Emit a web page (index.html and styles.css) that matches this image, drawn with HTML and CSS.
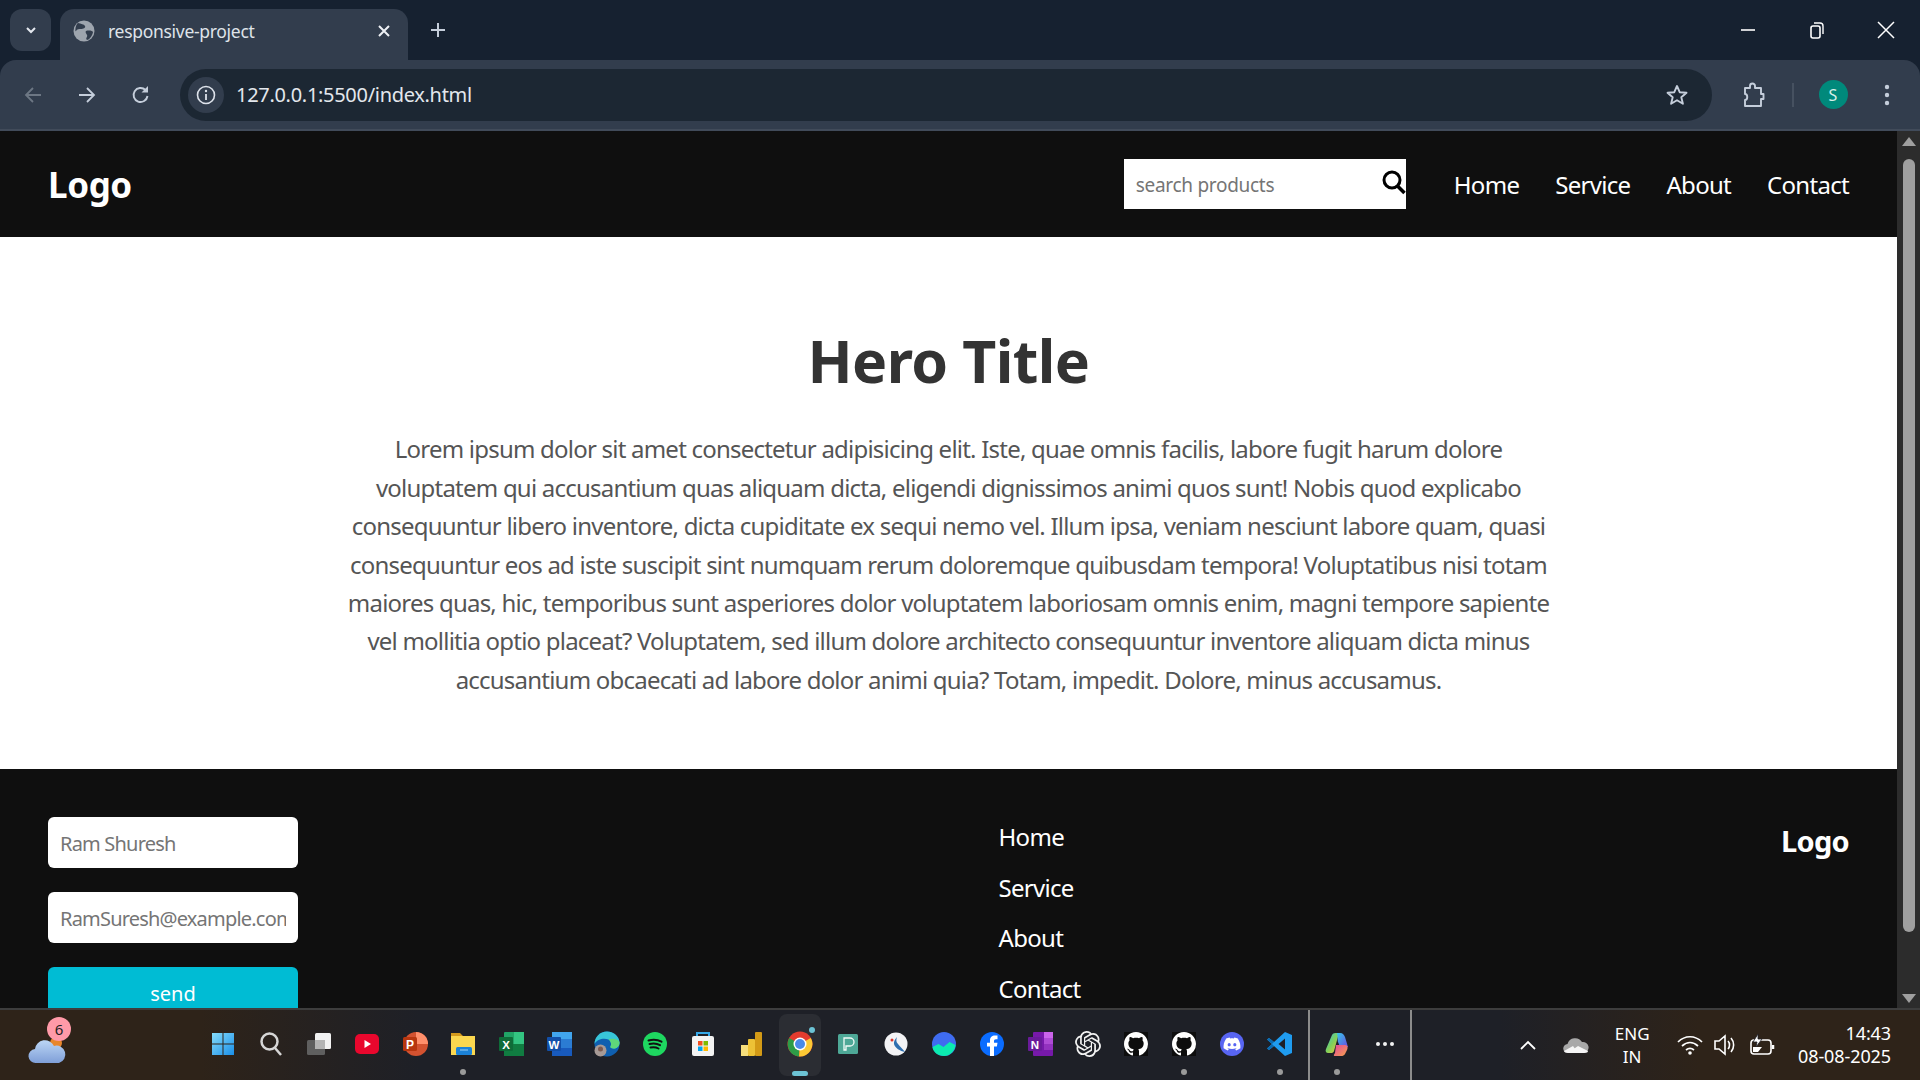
FILE: index.html
```html
<!DOCTYPE html>
<html>
<head>
  <meta charset="UTF-8">
  <meta name="viewport" content="width=device-width, initial-scale=1.0">
  <title>responsive-project</title>
  <link rel="stylesheet" href="styles.css">
</head>
<body>
  <div class="tabstrip">
    <div class="tab-menu">
      <svg width="14" height="14" viewBox="0 0 14 14"><path d="M3 5l4 4 4-4" fill="none" stroke="#e4e8ef" stroke-width="2"/></svg>
    </div>
    <div class="tab">
      <svg width="22" height="22" viewBox="0 0 22 22"><circle cx="11" cy="11" r="10.5" fill="#9ea5ae"/><path d="M5 3c3 1 6 1 7 3s-2 3-4 3-4 0-5 2-1-6 2-8zM13 11c3-1 7 0 7 1s-2 7-6 8c-2-2 1-3 0-5s-2-3-1-4z" fill="#323d4d"/></svg>
      <span class="tab-title">responsive-project</span>
      <svg class="tab-close" width="14" height="14" viewBox="0 0 14 14"><path d="M2 2l10 10M12 2L2 12" stroke="#eef1f5" stroke-width="2"/></svg>
    </div>
    <div class="new-tab">
      <svg width="18" height="18" viewBox="0 0 18 18"><path d="M9 2v14M2 9h14" stroke="#c5cedb" stroke-width="2"/></svg>
    </div>
    <div class="win-controls">
      <div class="win-btn"><svg width="16" height="16" viewBox="0 0 16 16"><path d="M1 8h14" stroke="#fff" stroke-width="1.6"/></svg></div>
      <div class="win-btn"><svg width="16" height="18" viewBox="0 0 16 18"><rect x="2" y="5" width="9" height="12" rx="2" fill="none" stroke="#fff" stroke-width="1.6"/><path d="M5 2h6a3 3 0 0 1 3 3v8" fill="none" stroke="#fff" stroke-width="1.4"/></svg></div>
      <div class="win-btn"><svg width="18" height="18" viewBox="0 0 18 18"><path d="M1 1l16 16M17 1L1 17" stroke="#fff" stroke-width="1.5"/></svg></div>
    </div>
  </div>

  <div class="toolbar">
    <div class="tool-btn">
      <svg width="20" height="20" viewBox="0 0 20 20"><path d="M18 10H3M10 3l-7 7 7 7" fill="none" stroke="#6d7784" stroke-width="1.8"/></svg>
    </div>
    <div class="tool-btn">
      <svg width="20" height="20" viewBox="0 0 20 20"><path d="M2 10h15M10 3l7 7-7 7" fill="none" stroke="#c5cedb" stroke-width="1.8"/></svg>
    </div>
    <div class="tool-btn">
      <svg width="20" height="20" viewBox="0 0 20 20"><path d="M16.500 11a7 7 0 1 1-2-6" fill="none" stroke="#c5cedb" stroke-width="1.900"/><path d="M17 1v6.500h-6.500z" fill="#c5cedb"/></svg>
    </div>
    <div class="omnibox">
      <div class="site-info">
        <svg width="20" height="20" viewBox="0 0 20 20"><circle cx="10" cy="10" r="8.500" fill="none" stroke="#dde2ea" stroke-width="1.600"/><path d="M10 9v6" stroke="#dde2ea" stroke-width="1.800"/><circle cx="10" cy="6" r="1.200" fill="#dde2ea"/></svg>
      </div>
      <span class="url">127.0.0.1:5500/index.html</span>
      <svg class="star" width="24" height="24" viewBox="0 0 24 24"><path d="M12 3l2.700 6.200 6.800.6-5.200 4.400 1.600 6.600L12 17.300l-5.900 3.500 1.600-6.600L2.500 9.800l6.800-.6z" fill="none" stroke="#c5cedb" stroke-width="1.900" stroke-linejoin="round"/></svg>
    </div>
    <div class="tool-btn ext-btn">
      <svg width="24" height="26" viewBox="0 0 24 26"><path d="M3 6h5V4a2.500 2.500 0 0 1 5 0v2h6v6h2.500v5H19v7H3v-6c3 0 3-6 0-6z" fill="none" stroke="#c5cedb" stroke-width="1.900" stroke-linejoin="round"/></svg>
    </div>
    <div class="tool-divider"></div>
    <div class="tool-btn avatar-btn"><span class="avatar">S</span></div>
    <div class="tool-btn">
      <svg width="6" height="22" viewBox="0 0 6 22"><circle cx="3" cy="3" r="2.200" fill="#c5cedb"/><circle cx="3" cy="11" r="2.200" fill="#c5cedb"/><circle cx="3" cy="19" r="2.200" fill="#c5cedb"/></svg>
    </div>
  </div>

  <div class="viewport">
    <div class="page">
      <header class="site-header">
        <div class="logo">Logo</div>
        <div class="header-right">
          <div class="search-box">
            <input type="text" placeholder="search products">
            <svg width="26" height="26" viewBox="0 0 26 26"><circle cx="11" cy="10" r="8" fill="none" stroke="#000" stroke-width="3"/><path d="M16.500 16l7 7" stroke="#000" stroke-width="3.500"/></svg>
          </div>
          <nav class="main-nav">
            <a href="#">Home</a>
            <a href="#">Service</a>
            <a href="#">About</a>
            <a href="#">Contact</a>
          </nav>
        </div>
      </header>

      <section class="hero">
        <h1>Hero Title</h1>
        <p>Lorem ipsum dolor sit amet consectetur adipisicing elit. Iste, quae omnis facilis, labore fugit harum dolore<br>
        voluptatem qui accusantium quas aliquam dicta, eligendi dignissimos animi quos sunt! Nobis quod explicabo<br>
        consequuntur libero inventore, dicta cupiditate ex sequi nemo vel. Illum ipsa, veniam nesciunt labore quam, quasi<br>
        consequuntur eos ad iste suscipit sint numquam rerum doloremque quibusdam tempora! Voluptatibus nisi totam<br>
        maiores quas, hic, temporibus sunt asperiores dolor voluptatem laboriosam omnis enim, magni tempore sapiente<br>
        vel mollitia optio placeat? Voluptatem, sed illum dolore architecto consequuntur inventore aliquam dicta minus<br>
        accusantium obcaecati ad labore dolor animi quia? Totam, impedit. Dolore, minus accusamus.</p>
      </section>

      <footer class="site-footer">
        <form class="footer-form">
          <input type="text" placeholder="Ram Shuresh">
          <input type="text" placeholder="RamSuresh@example.com">
          <button type="button">send</button>
        </form>
        <ul class="footer-links">
          <li><a href="#">Home</a></li>
          <li><a href="#">Service</a></li>
          <li><a href="#">About</a></li>
          <li><a href="#">Contact</a></li>
        </ul>
        <div class="footer-logo">Logo</div>
      </footer>
    </div>
    <div class="scrollbar">
      <div class="arrow-up"></div>
      <div class="thumb"></div>
      <div class="arrow-down"></div>
    </div>
  </div>

  <div class="taskbar">
    <div class="weather">
      <svg width="40" height="32" viewBox="0 0 40 32"><circle cx="28" cy="10" r="6" fill="#e8862c"/><defs><linearGradient id="cloud" x1="0" y1="0" x2="0" y2="1"><stop offset="0" stop-color="#bcd6f5"/><stop offset="1" stop-color="#7f9fd8"/></linearGradient></defs><path d="M8 30a7 7 0 0 1-1-14 10 10 0 0 1 19-3 8.500 8.500 0 0 1 5 17z" fill="url(#cloud)"/></svg>
      <span class="weather-badge">6</span>
    </div>
    <div class="task-icons">
      <div class="task-icon">
        <svg width="24" height="24" viewBox="0 0 24 24"><defs><linearGradient id="win" x1="0" y1="0" x2="1" y2="1"><stop offset="0" stop-color="#86dcfb"/><stop offset="1" stop-color="#1a8fe8"/></linearGradient></defs><path d="M1 1h10.500v10.500H1zM12.500 1H23v10.500H12.500zM1 12.500h10.500V23H1zM12.500 12.500H23V23H12.500z" fill="url(#win)"/></svg>
      </div>
      <div class="task-icon">
        <svg width="24" height="26" viewBox="0 0 24 26"><circle cx="10.500" cy="10.500" r="8" fill="none" stroke="#d6d6d6" stroke-width="2.500"/><path d="M16 17l6 7" stroke="#d6d6d6" stroke-width="2.500"/></svg>
      </div>
      <div class="task-icon">
        <svg width="26" height="24" viewBox="0 0 26 24"><rect x="9" y="1" width="16" height="16" rx="1.500" fill="#f2f2f2"/><rect x="1" y="8" width="18" height="15" rx="1.500" fill="#5f5f5f"/><rect x="9" y="8" width="10" height="9" fill="#b4b4b4"/></svg>
      </div>
      <div class="task-icon">
        <svg width="24" height="24" viewBox="0 0 24 24"><rect x="0" y="2" width="24" height="20" rx="5" fill="#e9072d"/><path d="M9.500 8l6.500 4-6.500 4z" fill="#fff"/></svg>
      </div>
      <div class="task-icon">
        <svg width="26" height="26" viewBox="0 0 26 26"><circle cx="14" cy="13" r="12" fill="#d35230"/><path d="M14 1a12 12 0 0 1 12 12H14z" fill="#ff8f6b"/><rect x="1" y="6" width="14" height="14" rx="1.500" fill="#b7360f"/><text class="icon-letter" x="8" y="18" text-anchor="middle" font-size="12">P</text></svg>
      </div>
      <div class="task-icon has-dot">
        <svg width="26" height="24" viewBox="0 0 26 24"><path d="M1 1h9l3 3h12v6H1z" fill="#d49a1d"/><rect x="1" y="4" width="24" height="19" fill="#fbd74f"/><rect x="6" y="15" width="16" height="8" rx="1.500" fill="#1b82d8"/><path d="M10 18h8" stroke="#9ed2f5" stroke-width="1"/></svg>
      </div>
      <div class="task-icon">
        <svg width="26" height="26" viewBox="0 0 26 26"><rect x="6" y="1" width="20" height="24" rx="1" fill="#21a366"/><rect x="16" y="1" width="10" height="12" fill="#33c481"/><rect x="6" y="13" width="20" height="12" fill="#107c41"/><rect x="1" y="6" width="14" height="14" rx="1" fill="#0e6b38"/><text class="icon-letter" x="8" y="17.500" text-anchor="middle" font-size="11.500">X</text></svg>
      </div>
      <div class="task-icon">
        <svg width="26" height="26" viewBox="0 0 26 26"><rect x="6" y="1" width="20" height="24" rx="1" fill="#2b7cd3"/><rect x="6" y="1" width="20" height="7" fill="#41a5ee"/><rect x="6" y="17" width="20" height="8" fill="#185abd"/><rect x="1" y="6" width="14" height="14" rx="1" fill="#124fa8"/><text class="icon-letter" x="8" y="17.500" text-anchor="middle" font-size="11.500">W</text></svg>
      </div>
      <div class="task-icon">
        <svg width="26" height="26" viewBox="0 0 26 26"><circle cx="13" cy="13" r="12.500" fill="#0f5fb0"/><path d="M.5 13C.5 6 6 .5 13 .5c6 0 12.500 4.500 12.500 11 0 4-3 6-6 6-2 0-3.500-1-3-2 1-1.500 1-5-2-7C10 6.500 3 8 .5 13z" fill="#38c6d8"/><path d="M25.500 11.500c0 4-3 6-6 6-2 0-3.500-1-3-2 1-1.500 1-5-2-7 4-2 11 0 11 3z" fill="#5fd67a"/><circle cx="6.500" cy="19.500" r="6" fill="#a79a96"/><circle cx="6.500" cy="18" r="2.500" fill="#7c5a50"/></svg>
      </div>
      <div class="task-icon">
        <svg width="24" height="24" viewBox="0 0 24 24"><circle cx="12" cy="12" r="12" fill="#1ed760"/><path d="M5.500 8.500c4-1 9-1 13 1.200M6.500 12c3.500-.8 7.500-.6 10.500 1.200M7.500 15.500c3-.6 5.500-.4 8 1" fill="none" stroke="#111" stroke-width="2" stroke-linecap="round"/></svg>
      </div>
      <div class="task-icon">
        <svg width="24" height="26" viewBox="0 0 24 26"><path d="M6 6V2h12v4" fill="none" stroke="#35a8e8" stroke-width="2"/><rect x="1" y="5" width="22" height="20" rx="2" fill="#f3f3f3"/><rect x="7" y="10" width="4.500" height="4.500" fill="#f25022"/><rect x="12.500" y="10" width="4.500" height="4.500" fill="#7fba00"/><rect x="7" y="15.500" width="4.500" height="4.500" fill="#00a4ef"/><rect x="12.500" y="15.500" width="4.500" height="4.500" fill="#ffb900"/></svg>
      </div>
      <div class="task-icon">
        <svg width="24" height="26" viewBox="0 0 24 26"><rect x="1" y="14" width="7" height="11" fill="#f6de7c"/><rect x="8" y="8" width="7" height="17" rx="1" fill="#edc236"/><rect x="15" y="1" width="7" height="24" rx="1" fill="#d39a16"/></svg>
      </div>
      <div class="task-icon chrome-active">
        <svg width="26" height="26" viewBox="0 0 26 26"><circle cx="13" cy="13" r="12.500" fill="#e33b2e"/><path d="M13 13L2.200 7A12.500 12.500 0 0 0 12 25.500z" fill="#2d9c47"/><path d="M13 13l10.800-6A12.500 12.500 0 0 1 12 25.500z" fill="#fcc934"/><circle cx="13" cy="13" r="6.500" fill="#fff"/><circle cx="13" cy="13" r="5" fill="#4a8ae8"/></svg>
        <span class="chrome-badge"></span>
        <span class="chrome-bar"></span>
      </div>
      <div class="task-icon">
        <svg width="22" height="22" viewBox="0 0 22 22"><rect x="1" y="1" width="20" height="20" rx="1.500" fill="#4ea897"/><path d="M7 17V5h6a3.500 3.500 0 0 1 0 8H9v4z" fill="none" stroke="#f1faf8" stroke-width="1.300"/></svg>
      </div>
      <div class="task-icon">
        <svg width="24" height="24" viewBox="0 0 24 24"><circle cx="12" cy="12" r="11.500" fill="#f3f3f5"/><path d="M21 20c-5-1-10-4-11-8-.5-2 1-5 3-7-1 3-1 5 1 7 2 3 5 5 7 8z" fill="#2d6fb0"/><circle cx="8" cy="8" r="1.500" fill="#d8352c"/></svg>
      </div>
      <div class="task-icon">
        <svg width="24" height="24" viewBox="0 0 24 24"><circle cx="12" cy="12" r="12" fill="#3f6cf0"/><path d="M.5 15l6-3 5 3 6-5 6 3c-.5 6-5.500 11-11.500 11S1 20 .5 15z" fill="#0cebb0"/></svg>
      </div>
      <div class="task-icon">
        <svg width="24" height="24" viewBox="0 0 24 24"><circle cx="12" cy="12" r="12" fill="#0a6cff"/><path d="M10 24V14.500H7v-3.800h3V8.500C10 5 12 3.500 15 3.500h2.500v3.700H16c-1.500 0-2 .7-2 2v1.500h3.500l-.6 3.800H14V24z" fill="#fff"/></svg>
      </div>
      <div class="task-icon">
        <svg width="26" height="26" viewBox="0 0 26 26"><rect x="6" y="1" width="20" height="24" rx="1" fill="#7719aa"/><rect x="17" y="1" width="9" height="6" fill="#ca64ea"/><rect x="17" y="7" width="9" height="6" fill="#ae4bd5"/><rect x="17" y="13" width="9" height="6" fill="#9332bf"/><rect x="1" y="6" width="14" height="14" rx="1" fill="#6a1b9a"/><text class="icon-letter" x="8" y="17.500" text-anchor="middle" font-size="11.500">N</text></svg>
      </div>
      <div class="task-icon">
        <svg width="26" height="26" viewBox="0 0 24 24"><path fill="#f2f2f2" d="M22.2819 9.8211a5.9847 5.9847 0 0 0-.5157-4.9108 6.0462 6.0462 0 0 0-6.5098-2.9A6.0651 6.0651 0 0 0 4.9807 4.1818a5.9847 5.9847 0 0 0-3.9977 2.9 6.0462 6.0462 0 0 0 .7427 7.0966 5.98 5.98 0 0 0 .511 4.9107 6.051 6.051 0 0 0 6.5146 2.9001A5.9847 5.9847 0 0 0 13.2599 24a6.0557 6.0557 0 0 0 5.7718-4.2058 5.9894 5.9894 0 0 0 3.9977-2.9001 6.0557 6.0557 0 0 0-.7475-7.0729zm-9.022 12.6081a4.4755 4.4755 0 0 1-2.8764-1.0408l.1419-.0804 4.7783-2.7582a.7948.7948 0 0 0 .3927-.6813v-6.7369l2.02 1.1686a.071.071 0 0 1 .038.052v5.5826a4.504 4.504 0 0 1-4.4945 4.4944zm-9.6607-4.1254a4.4708 4.4708 0 0 1-.5346-3.0137l.142.0852 4.783 2.7582a.7712.7712 0 0 0 .7806 0l5.8428-3.3685v2.3324a.0804.0804 0 0 1-.0332.0615L9.74 19.9502a4.4992 4.4992 0 0 1-6.1408-1.6464zM2.3408 7.8956a4.485 4.485 0 0 1 2.3655-1.9728V11.6a.7664.7664 0 0 0 .3879.6765l5.8144 3.3543-2.0201 1.1685a.0757.0757 0 0 1-.071 0l-4.8303-2.7865A4.504 4.504 0 0 1 2.3408 7.872zm16.5963 3.8558L13.1038 8.364 15.1192 7.2a.0757.0757 0 0 1 .071 0l4.8303 2.7913a4.4944 4.4944 0 0 1-.6765 8.1042v-5.6772a.79.79 0 0 0-.407-.667zm2.0107-3.0231l-.142-.0852-4.7735-2.7818a.7759.7759 0 0 0-.7854 0L9.409 9.2297V6.8974a.0662.0662 0 0 1 .0284-.0615l4.8303-2.7866a4.4992 4.4992 0 0 1 6.6802 4.66zM8.3065 12.863l-2.02-1.1638a.0804.0804 0 0 1-.038-.0567V6.0742a4.4992 4.4992 0 0 1 7.3757-3.4537l-.142.0805L8.704 5.459a.7948.7948 0 0 0-.3927.6813zm1.0976-2.3654l2.602-1.4998 2.6069 1.4998v2.9994l-2.5974 1.4997-2.6067-1.4997Z"/></svg>
      </div>
      <div class="task-icon">
        <svg width="24" height="24" viewBox="0 0 16 16"><rect width="16" height="16" fill="#0d0d0d"/><path fill="#fff" d="M8 0C3.58 0 0 3.58 0 8c0 3.54 2.29 6.53 5.47 7.59.4.07.55-.17.55-.38 0-.19-.01-.82-.01-1.49-2.01.37-2.53-.49-2.69-.94-.09-.23-.48-.94-.82-1.13-.28-.15-.68-.52-.01-.53.63-.01 1.08.58 1.23.82.72 1.21 1.87.87 2.33.66.07-.52.28-.87.51-1.07-1.78-.2-3.64-.89-3.64-3.95 0-.87.31-1.59.82-2.15-.08-.2-.36-1.02.08-2.12 0 0 .67-.21 2.2.82.64-.18 1.32-.27 2-.27.68 0 1.36.09 2 .27 1.53-1.04 2.2-.82 2.2-.82.44 1.1.16 1.92.08 2.12.51.56.82 1.27.82 2.15 0 3.07-1.87 3.75-3.65 3.95.29.25.54.73.54 1.48 0 1.07-.01 1.93-.01 2.2 0 .21.15.46.55.38A8.013 8.013 0 0 0 16 8c0-4.42-3.58-8-8-8z"/></svg>
      </div>
      <div class="task-icon has-dot">
        <svg width="24" height="24" viewBox="0 0 16 16"><rect width="16" height="16" fill="#0d0d0d"/><path fill="#fff" d="M8 0C3.58 0 0 3.58 0 8c0 3.54 2.29 6.53 5.47 7.59.4.07.55-.17.55-.38 0-.19-.01-.82-.01-1.49-2.01.37-2.53-.49-2.69-.94-.09-.23-.48-.94-.82-1.13-.28-.15-.68-.52-.01-.53.63-.01 1.08.58 1.23.82.72 1.21 1.87.87 2.33.66.07-.52.28-.87.51-1.07-1.78-.2-3.64-.89-3.64-3.95 0-.87.31-1.59.82-2.15-.08-.2-.36-1.02.08-2.12 0 0 .67-.21 2.2.82.64-.18 1.32-.27 2-.27.68 0 1.36.09 2 .27 1.53-1.04 2.2-.82 2.2-.82.44 1.1.16 1.92.08 2.12.51.56.82 1.27.82 2.15 0 3.07-1.87 3.75-3.65 3.95.29.25.54.73.54 1.48 0 1.07-.01 1.93-.01 2.2 0 .21.15.46.55.38A8.013 8.013 0 0 0 16 8c0-4.42-3.58-8-8-8z"/></svg>
      </div>
      <div class="task-icon">
        <svg width="24" height="24" viewBox="-5 -5 34 34"><circle cx="12" cy="12" r="17" fill="#5865f2"/><path fill="#fff" d="M20.317 4.3698a19.7913 19.7913 0 0 0-4.8851-1.5152.0741.0741 0 0 0-.0785.0371c-.211.3753-.4447.8648-.6083 1.2495-1.8447-.2762-3.68-.2762-5.4868 0-.1636-.3933-.4058-.8742-.6177-1.2495a.077.077 0 0 0-.0785-.037 19.7363 19.7363 0 0 0-4.8852 1.515.0699.0699 0 0 0-.0321.0277C.5334 9.0458-.319 13.5799.0992 18.0578a.0824.0824 0 0 0 .0312.0561c2.0528 1.5076 4.0413 2.4228 5.9929 3.0294a.0777.0777 0 0 0 .0842-.0276c.4616-.6304.8731-1.2952 1.226-1.9942a.076.076 0 0 0-.0416-.1057c-.6528-.2476-1.2743-.5495-1.8722-.8923a.077.077 0 0 1-.0076-.1277c.1258-.0943.2517-.1923.3718-.2914a.0743.0743 0 0 1 .0776-.0105c3.9278 1.7933 8.18 1.7933 12.0614 0a.0739.0739 0 0 1 .0785.0095c.1202.099.246.1981.3728.2924a.077.077 0 0 1-.0066.1276 12.2986 12.2986 0 0 1-1.873.8914.0766.0766 0 0 0-.0407.1067c.3604.698.7719 1.3628 1.225 1.9932a.076.076 0 0 0 .0842.0286c1.961-.6067 3.9495-1.5219 6.0023-3.0294a.077.077 0 0 0 .0313-.0552c.5004-5.177-.8382-9.6739-3.5485-13.6604a.061.061 0 0 0-.0312-.0286zM8.02 15.3312c-1.1825 0-2.1569-1.0857-2.1569-2.419 0-1.3332.9555-2.4189 2.157-2.4189 1.2108 0 2.1757 1.0952 2.1568 2.419 0 1.3332-.9555 2.4189-2.1569 2.4189zm7.9748 0c-1.1825 0-2.1569-1.0857-2.1569-2.419 0-1.3332.9554-2.4189 2.1569-2.4189 1.2108 0 2.1757 1.0952 2.1568 2.419 0 1.3332-.946 2.4189-2.1568 2.4189Z"/></svg>
      </div>
      <div class="task-icon has-dot">
        <svg width="26" height="26" viewBox="0 0 26 26"><path d="M18 1l7 3v18l-7 3L7 15l-5 4-2-1.500L5 13 0 8.500 2 7l5 4z" fill="#1f9cf0"/><path d="M18 7.500L11.500 13l6.500 5.500z" fill="#1e2027"/><path d="M2 7l5 4-2 2-5-4.500zM0 17.500L5 13l2 2-5 4z" fill="#0a6ab0"/></svg>
      </div>
    </div>
    <div class="task-divider"></div>
    <div class="task-icon has-dot">
      <svg width="24" height="24" viewBox="0 0 24 24"><defs><linearGradient id="copC" x1="0" y1="0" x2="1" y2="1"><stop offset="0" stop-color="#35c1e8"/><stop offset=".5" stop-color="#7ed05a"/><stop offset="1" stop-color="#f4c93a"/></linearGradient><linearGradient id="copA" x1="0" y1="0" x2="1" y2="1"><stop offset="0" stop-color="#35c6ea"/><stop offset="1" stop-color="#6b4be0"/></linearGradient><linearGradient id="copB" x1="0" y1="0" x2="1" y2="1"><stop offset="0" stop-color="#e2489e"/><stop offset="1" stop-color="#f7a24a"/></linearGradient></defs><path d="M7 3c1-2 3-2 5-2h2L9 19c-.5 1.500-1.500 2-3 2H3c-2 0-3-2-2-4z" fill="url(#copC)"/><path d="M12 1h3c3 0 4 2 5 4l3 10h-8l-2-5c-.5-1.500 0-4-1-9z" fill="url(#copA)"/><path d="M11 13h9c3 0 3 3 2 5l-2 4c-1 1.500-2 2-4 2h-6c-2 0-1-2 0-3z" fill="url(#copB)"/></svg>
    </div>
    <div class="task-icon more-dots">
      <svg width="20" height="6" viewBox="0 0 20 6"><circle cx="3" cy="3" r="2" fill="#f2f2f2"/><circle cx="10" cy="3" r="2" fill="#f2f2f2"/><circle cx="17" cy="3" r="2" fill="#f2f2f2"/></svg>
    </div>
    <div class="task-divider tray-divider"></div>
    <div class="tray">
      <svg class="tray-chevron" width="18" height="12" viewBox="0 0 18 12"><path d="M2 10l7-7 7 7" fill="none" stroke="#fff" stroke-width="1.800"/></svg>
      <svg class="tray-cloud" width="26" height="18" viewBox="0 0 26 18"><path d="M5 17a4.500 4.500 0 0 1-.5-9A8 8 0 0 1 19 6a5.500 5.500 0 0 1 2 11z" fill="#a8a8a8"/><path d="M5 17l10-7 10 5c0 1-1 2-4 2z" fill="#f5f5f5"/><path d="M1 15c0 1 2 2 4 2h10l-5-7z" fill="#f5f5f5"/></svg>
      <div class="lang">ENG<br>IN</div>
      <svg class="tray-wifi" width="26" height="22" viewBox="0 0 26 22" fill="none" stroke="#fff" stroke-width="1.700"><path d="M1 8c7-7 17-7 24 0M5 12c5-4.500 11-4.500 16 0M9 16c2.500-2 5.500-2 8 0"/><circle cx="13" cy="19" r="1.800" fill="#fff" stroke="none"/></svg>
      <svg class="tray-sound" width="26" height="22" viewBox="0 0 26 22" fill="none" stroke="#fff" stroke-width="1.600"><path d="M2 7h4l6-5v18l-6-5H2zM15 7c2 2 2 6 0 8M18 4c3.500 4 3.500 10 0 14"/></svg>
      <svg class="tray-battery" width="26" height="22" viewBox="0 0 26 22" fill="none" stroke="#fff" stroke-width="1.600"><rect x="2" y="6" width="20" height="14" rx="3"/><path d="M24 11v4" stroke-width="2.500"/><path d="M4 18v-5h9l-4 5z" fill="#fff" stroke="none"/><path d="M9 0L4 8h4l-1 5 6-8H9z" fill="#fff" stroke="#1e2027" stroke-width=".8"/></svg>
      <div class="clock">14:43<br>08-08-2025</div>
    </div>
  </div>
</body>
</html>
```

FILE: styles.css
```css
* {
  box-sizing: border-box;
}

html, body {
  margin: 0;
  height: 100%;
  overflow: hidden;
}

body {
  display: flex;
  flex-direction: column;
  font-family: "Noto Sans", sans-serif;
  background-color: #162130;
}

/* browser tabs */
.tabstrip {
  display: flex;
  align-items: flex-start;
  height: 60px;
  padding-left: 10px;
  background-color: #162130;
  flex-shrink: 0;
}

.tab-menu {
  display: flex;
  align-items: center;
  justify-content: center;
  width: 41px;
  height: 42px;
  margin-top: 9px;
  border-radius: 12px;
  background-color: #323d4d;
}

.tab {
  display: flex;
  align-items: center;
  width: 348px;
  height: 51px;
  margin-top: 9px;
  margin-left: 9px;
  padding: 0 17px 8px 13px;
  border-radius: 14px 14px 0 0;
  background-color: #323d4d;
}

.tab-title {
  flex: 1;
  margin-left: 13px;
  font-size: 17.5px;
  letter-spacing: -0.3px;
  color: #dfe3e9;
}

.new-tab {
  display: flex;
  align-items: center;
  justify-content: center;
  width: 42px;
  height: 42px;
  margin-top: 9px;
  margin-left: 9px;
}

.win-controls {
  display: flex;
  margin-left: auto;
  padding-top: 9px;
}

.win-btn {
  display: flex;
  align-items: center;
  justify-content: center;
  width: 69px;
  height: 42px;
}

/* address bar */
.toolbar {
  display: flex;
  align-items: center;
  height: 71px;
  padding-left: 6px;
  border-bottom: 2px solid #414b5a;
  border-radius: 16px 16px 0 0;
  background-color: #323d4d;
  flex-shrink: 0;
}

.tool-btn {
  display: flex;
  align-items: center;
  justify-content: center;
  width: 54px;
  height: 44px;
}

.omnibox {
  display: flex;
  align-items: center;
  width: 1532px;
  height: 52px;
  margin-left: 12px;
  padding: 0 23px 0 8px;
  border-radius: 26px;
  background-color: #1c2733;
}

.site-info {
  display: flex;
  align-items: center;
  justify-content: center;
  width: 36px;
  height: 36px;
  border-radius: 50%;
  background-color: #323d4d;
}

.url {
  flex: 1;
  margin-left: 12px;
  font-size: 20px;
  letter-spacing: -0.3px;
  color: #e3e7ed;
}

.ext-btn {
  margin-left: 15px;
}

.tool-divider {
  width: 2px;
  height: 24px;
  margin-left: 11px;
  background-color: #465160;
}

.avatar-btn {
  margin-left: 12px;
}

.avatar {
  display: flex;
  align-items: center;
  justify-content: center;
  width: 29px;
  height: 29px;
  border-radius: 50%;
  font-size: 16px;
  color: #d8f0ea;
  background-color: #00897b;
}

/* the page in the tab */
.viewport {
  display: flex;
  flex: 1;
  min-height: 0;
}

.page {
  flex: 1;
  min-width: 0;
  overflow: hidden;
  background-color: #fff;
}

.site-header {
  display: flex;
  align-items: center;
  justify-content: space-between;
  height: 106px;
  padding: 0 48px;
  background-color: #0f0f0f;
}

.logo {
  font-size: 35px;
  font-weight: 700;
  letter-spacing: -0.4px;
  color: #fff;
}

.header-right {
  display: flex;
  align-items: center;
}

.search-box {
  display: flex;
  align-items: center;
  width: 282px;
  height: 50px;
  overflow: hidden;
  background-color: #fff;
}

.search-box input {
  flex: 1;
  min-width: 0;
  padding: 2px 12px 0;
  border: none;
  outline: none;
  font-family: inherit;
  font-size: 19px;
  letter-spacing: -0.3px;
}

.search-box svg {
  flex-shrink: 0;
  margin-right: -1px;
  margin-bottom: 2px;
}

.main-nav {
  display: flex;
  gap: 36px;
  margin-left: 48px;
  padding-top: 2px;
}

.main-nav a,
.footer-links a {
  font-size: 24px;
  line-height: 1.6;
  letter-spacing: -0.7px;
  color: #fff;
  text-decoration: none;
}

.hero {
  padding: 76px 48px 70px;
  text-align: center;
}

.hero h1 {
  margin: 0 0 23px;
  font-size: 59px;
  line-height: 1.6;
  letter-spacing: -0.6px;
  color: #333;
}

.hero p {
  margin: 0;
  font-size: 24px;
  line-height: 1.6;
  letter-spacing: -0.78px;
  color: #555;
}

.site-footer {
  display: flex;
  justify-content: space-between;
  padding: 48px;
  background-color: #0f0f0f;
}

.footer-form {
  display: flex;
  flex-direction: column;
  gap: 24px;
  width: 250px;
}

.footer-form input {
  width: 100%;
  height: 51px;
  padding: 2px 12px 0;
  border: none;
  border-radius: 6px;
  outline: none;
  font-family: inherit;
  font-size: 20px;
  letter-spacing: -0.8px;
}

.footer-form button {
  height: 51px;
  padding-top: 3px;
  border: none;
  border-radius: 6px;
  font-family: inherit;
  font-size: 20px;
  color: #fff;
  background-color: #00bcd4;
}

.footer-links {
  margin: 0;
  padding: 1px 0 0;
  list-style: none;
}

.footer-links li {
  margin-bottom: 12.2px;
}

.footer-logo {
  padding-top: 4px;
  font-size: 29px;
  font-weight: 700;
  letter-spacing: -0.7px;
  color: #fff;
}

.scrollbar {
  position: relative;
  flex: 0 0 23px;
  background-color: #2c2c2c;
}

.thumb {
  position: absolute;
  top: 28px;
  left: 6px;
  width: 12px;
  height: 773px;
  border-radius: 6px;
  background-color: #9f9f9f;
}

.arrow-up,
.arrow-down {
  position: absolute;
  left: 5px;
  width: 0;
  height: 0;
  border-left: 7px solid transparent;
  border-right: 7px solid transparent;
}

.arrow-up {
  top: 6px;
  border-bottom: 9px solid #9f9f9f;
}

.arrow-down {
  bottom: 5px;
  border-top: 9px solid #9f9f9f;
}

/* windows taskbar */
.taskbar {
  display: flex;
  align-items: center;
  height: 72px;
  border-top: 2px solid #3d3d3d;
  background: linear-gradient(90deg, #2e2319 0, #2e2319 200px, #1e2027 420px, #1e2027 1500px, #2e2319 1700px, #2e2319 100%);
  flex-shrink: 0;
}

.weather {
  position: relative;
  width: 199px;
  padding-left: 28px;
  padding-top: 8px;
}

.weather svg {
  display: block;
}

.weather-badge {
  position: absolute;
  top: -8px;
  left: 47px;
  width: 24px;
  height: 24px;
  border-radius: 50%;
  font-size: 15px;
  line-height: 24px;
  text-align: center;
  color: #222;
  background-color: #ff9aa8;
}

.task-icons {
  display: flex;
}

.task-icon {
  position: relative;
  display: flex;
  align-items: center;
  justify-content: center;
  width: 48.05px;
  height: 70px;
  padding-bottom: 2px;
}

.icon-letter {
  font-family: "Liberation Sans", sans-serif;
  font-weight: 700;
  fill: #fff;
}

.has-dot::after {
  content: "";
  position: absolute;
  bottom: 5px;
  left: 21px;
  width: 6px;
  height: 6px;
  border-radius: 50%;
  background-color: #9a9a9a;
}

.chrome-active::before {
  content: "";
  position: absolute;
  top: 4px;
  left: 3px;
  width: 42px;
  height: 62px;
  border-radius: 8px;
  background-color: #2b2d33;
}

.chrome-active svg {
  position: relative;
}

.chrome-badge {
  position: absolute;
  top: 17px;
  left: 33px;
  width: 6px;
  height: 6px;
  border-radius: 50%;
  background-color: #6cc3d5;
}

.chrome-bar {
  position: absolute;
  bottom: 4px;
  left: 16px;
  width: 16px;
  height: 5px;
  border-radius: 3px;
  background-color: #6cc3d5;
}

.task-divider {
  width: 2px;
  height: 70px;
  margin: 0 3px 0 4px;
  background-color: #8c8c8c;
}

.tray-divider {
  margin-left: 1px;
}

.tray {
  display: flex;
  flex: 1;
  align-items: center;
  color: #fff;
}

.tray-chevron {
  margin-left: 104px;
}

.tray-cloud {
  margin-left: 26px;
}

.lang {
  width: 40px;
  margin-left: 23px;
  font-size: 17px;
  line-height: 23px;
  text-align: center;
}

.tray-wifi {
  margin-left: 25px;
}

.tray-sound {
  margin-left: 10px;
}

.tray-battery {
  margin-left: 10px;
}

.clock {
  margin-left: auto;
  margin-right: 29px;
  font-size: 18px;
  line-height: 23px;
  letter-spacing: -0.1px;
  text-align: right;
}
```
